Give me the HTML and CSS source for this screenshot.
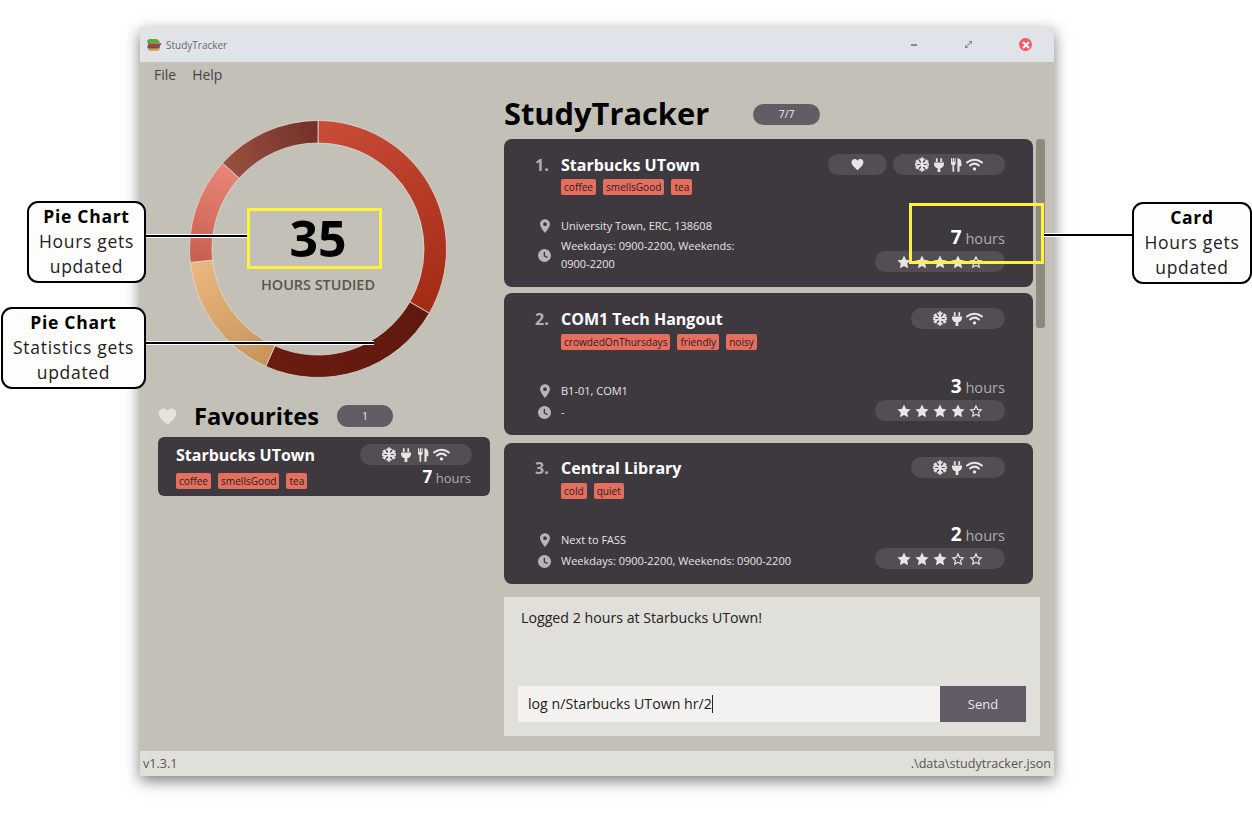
FILE: index.html
```html
<!DOCTYPE html>
<html lang="en">

<head>
    <meta charset="UTF-8">
    <title>StudyTracker</title>
    <link rel="stylesheet" href="styles.css">
</head>

<body>
    <svg class="defs" width="0" height="0">
        <symbol id="i-heart" viewBox="0 0 24 24">
            <path fill="currentColor" d="M12 22.500C5 16.500 1 12.800 1 8 1 4.400 3.700 2 6.800 2 9 2 11 3.200 12 5.200 13 3.200 15 2 17.200 2 20.300 2 23 4.400 23 8c0 4.800-4 8.500-11 14.500z" />
        </symbol>
        <symbol id="i-snow" viewBox="1 0 22 24">
            <g fill="none" stroke="currentColor" stroke-width="2.800" stroke-linecap="round">
                <path d="M12 1.500V22.500M2.900 6.750 21.100 17.250M2.900 17.250 21.100 6.750" />
                <path d="M9 3.500l3 3 3-3M9 20.500l3-3 3 3M2.200 10.700l4.100-1.100-1.100-4.100M21.800 13.300l-4.100 1.100 1.100 4.100M5.200 18.500l1.100-4.100-4.100-1.100M18.800 5.500l-1.100 4.100 4.100 1.100" />
            </g>
        </symbol>
        <symbol id="i-plug" viewBox="0 0 16 22">
            <path fill="currentColor" d="M3 0h2.800v6H3zM10.200 0H13v6h-2.800zM0 7h16v2.500c0 3.600-2.300 6-5.800 6.600V22H5.800v-5.900C2.300 15.500 0 13.100 0 9.500z" />
        </symbol>
        <symbol id="i-food" viewBox="0 0 18 22">
            <path fill="currentColor" d="M0 0h1.800v6h1V0h2v6h1V0h1.800v8c0 1.800-1 3-2.400 3.500V22H2.400V11.500C1 11 0 9.800 0 8zM10.500 0C14.500 0 17 3 17 8v5h-3v9h-3.500z" />
        </symbol>
        <symbol id="i-wifi" viewBox="0 0 24 18">
            <g fill="none" stroke="currentColor" stroke-width="2.800" stroke-linecap="round">
                <path d="M1.500 6.200C7.500.8 16.500.8 22.500 6.200" />
                <path d="M5.600 10.400c3.900-3.200 8.900-3.200 12.800 0" />
            </g>
            <circle cx="12" cy="15.200" r="2.400" fill="currentColor" />
        </symbol>
        <symbol id="i-star" viewBox="0 0 24 24">
            <path fill="currentColor" d="M12 1l3.400 7.300 7.900 1-5.800 5.400 1.500 7.900-7-3.900-7 3.900 1.500-7.900L.7 9.300l7.900-1z" />
        </symbol>
        <symbol id="i-star-o" viewBox="0 0 24 24">
            <path fill="none" stroke="currentColor" stroke-width="2" d="M12 3.300l2.700 5.900 6.400.8-4.700 4.400 1.200 6.400-5.600-3.100-5.600 3.100 1.200-6.400L2.900 10l6.400-.8z" />
        </symbol>
        <symbol id="i-pin" viewBox="0 0 16 22">
            <path fill="currentColor" fill-rule="evenodd" d="M8 0c4.400 0 8 3.500 8 7.800C16 13 8 22 8 22S0 13 0 7.800C0 3.500 3.600 0 8 0zm0 5a3 3 0 1 0 0 6 3 3 0 0 0 0-6z" />
        </symbol>
        <symbol id="i-clock" viewBox="0 0 24 24">
            <path fill="currentColor" fill-rule="evenodd" d="M12 0a12 12 0 1 1 0 24 12 12 0 0 1 0-24zm-1.500 5v8.200l6.400 3.800 1.300-2.100-5.200-3.100V5z" />
        </symbol>
    </svg>

    <div class="stage">
        <div class="window">
            <div class="titlebar">
                <svg class="app-icon" viewBox="0 0 14 12" width="14" height="12">
                    <path fill="#e8a23a" d="M1 9h10l2-1v2l-2 2H2z" />
                    <path fill="#2f5fa8" d="M0 7h11l2-1v2l-2 1.500H1z" />
                    <path fill="#c8352f" d="M1 4.500h10l3-.5v2l-3 1.500H1z" />
                    <path fill="#5fa83a" d="M2 0h8l3 3-2 2H1L0 2z" />
                </svg>
                <span class="app-name">StudyTracker</span>
                <div class="win-btns">
                    <span class="win-min"></span>
                    <svg class="win-max" viewBox="0 0 10 10">
                        <path fill="#85888c" d="M5 0H10v5zM0 5 5 10H0z" />
                        <path stroke="#85888c" stroke-width="1.500" d="M3 7l4-4" />
                    </svg>
                    <span class="win-close">
                        <svg viewBox="0 0 8 8" width="8" height="8">
                            <path stroke="#fff" stroke-width="2" d="M1 1l6 6M7 1 1 7" />
                        </svg>
                    </span>
                </div>
            </div>

            <div class="menubar">
                <span>File</span>
                <span>Help</span>
            </div>

            <div class="main">
                <div class="left">
                    <div class="chart">
                        <svg viewBox="0 0 260 260" width="260" height="260">
                            <defs>
                                <linearGradient id="g1" gradientUnits="userSpaceOnUse" x1="130" y1="0" x2="240" y2="190">
                                    <stop offset="0" stop-color="#ca4c39" />
                                    <stop offset="1" stop-color="#a32c17" />
                                </linearGradient>
                                <linearGradient id="g2" gradientUnits="userSpaceOnUse" x1="240" y1="190" x2="80" y2="250">
                                    <stop offset="0" stop-color="#5f190e" />
                                    <stop offset="1" stop-color="#6c1b10" />
                                </linearGradient>
                                <linearGradient id="g3" gradientUnits="userSpaceOnUse" x1="10" y1="145" x2="85" y2="245">
                                    <stop offset="0" stop-color="#e9b77f" />
                                    <stop offset="1" stop-color="#c69259" />
                                </linearGradient>
                                <linearGradient id="g4" gradientUnits="userSpaceOnUse" x1="45" y1="50" x2="10" y2="140">
                                    <stop offset="0" stop-color="#e88679" />
                                    <stop offset="1" stop-color="#c9604f" />
                                </linearGradient>
                                <linearGradient id="g5" gradientUnits="userSpaceOnUse" x1="40" y1="50" x2="130" y2="15">
                                    <stop offset="0" stop-color="#98503f" />
                                    <stop offset="1" stop-color="#74302a" />
                                </linearGradient>
                            </defs>
                            <g stroke="#dddbd4" stroke-width="0.800">
                                <path fill="url(#g1)" d="M130 1.500A128.500 128.500 0 0 1 241.280 194.250L221.800 183A106 106 0 0 0 130 24z" />
                                <path fill="url(#g2)" d="M241.280 194.250A128.500 128.500 0 0 1 77.740 247.390L86.890 226.840A106 106 0 0 0 221.800 183z" />
                                <path fill="url(#g3)" d="M77.740 247.390A128.500 128.500 0 0 1 2.210 143.430L24.580 141.080A106 106 0 0 0 86.890 226.840z" />
                                <path fill="url(#g4)" d="M2.210 143.430A128.500 128.500 0 0 1 34.510 44.020L51.230 59.070A106 106 0 0 0 24.580 141.080z" />
                                <path fill="url(#g5)" d="M34.510 44.020A128.500 128.500 0 0 1 130 1.500V24A106 106 0 0 0 51.230 59.070z" />
                            </g>
                        </svg>
                        <div class="chart-center">
                            <div class="chart-num">35</div>
                            <div class="chart-label">HOURS STUDIED</div>
                        </div>
                    </div>

                    <div class="fav-head">
                        <svg class="fav-heart"><use href="#i-heart" /></svg>
                        <span class="fav-title">Favourites</span>
                        <span class="badge badge-fav">1</span>
                    </div>

                    <div class="fav-card">
                        <div class="fav-info">
                            <div class="name">Starbucks UTown</div>
                            <div class="tags">
                                <span class="tag">coffee</span>
                                <span class="tag">smellsGood</span>
                                <span class="tag">tea</span>
                            </div>
                        </div>
                        <div class="card-side">
                            <div class="pill pill-wide">
                                <svg class="ic-snow"><use href="#i-snow" /></svg>
                                <svg class="ic-plug"><use href="#i-plug" /></svg>
                                <svg class="ic-food"><use href="#i-food" /></svg>
                                <svg class="ic-wifi"><use href="#i-wifi" /></svg>
                            </div>
                            <div class="hours"><b>7</b> hours</div>
                        </div>
                    </div>
                </div>

                <div class="right">
                    <div class="right-head">
                        <span class="big-title">StudyTracker</span>
                        <span class="badge badge-count">7/7</span>
                    </div>

                    <div class="list-wrap">
                        <div class="list">
                            <div class="card">
                                <div class="card-left">
                                    <div class="card-top">
                                        <span class="index">1.</span>
                                        <div>
                                            <div class="name">Starbucks UTown</div>
                                            <div class="tags">
                                                <span class="tag">coffee</span>
                                                <span class="tag">smellsGood</span>
                                                <span class="tag">tea</span>
                                            </div>
                                        </div>
                                    </div>
                                    <div class="details">
                                        <div class="detail">
                                            <svg class="ic-pin"><use href="#i-pin" /></svg>
                                            <span>University Town, ERC, 138608</span>
                                        </div>
                                        <div class="detail">
                                            <svg class="ic-clock"><use href="#i-clock" /></svg>
                                            <span>Weekdays: 0900-2200, Weekends:<br>0900-2200</span>
                                        </div>
                                    </div>
                                </div>
                                <div class="card-side">
                                    <div class="pills">
                                        <div class="pill pill-fav">
                                            <svg class="ic-heart"><use href="#i-heart" /></svg>
                                        </div>
                                        <div class="pill pill-wide">
                                            <svg class="ic-snow"><use href="#i-snow" /></svg>
                                            <svg class="ic-plug"><use href="#i-plug" /></svg>
                                            <svg class="ic-food"><use href="#i-food" /></svg>
                                            <svg class="ic-wifi"><use href="#i-wifi" /></svg>
                                        </div>
                                    </div>
                                    <div class="side-bottom">
                                        <div class="hours"><b>7</b> hours</div>
                                        <div class="pill pill-stars">
                                            <svg class="ic-star"><use href="#i-star" /></svg>
                                            <svg class="ic-star"><use href="#i-star" /></svg>
                                            <svg class="ic-star"><use href="#i-star" /></svg>
                                            <svg class="ic-star"><use href="#i-star" /></svg>
                                            <svg class="ic-star"><use href="#i-star-o" /></svg>
                                        </div>
                                    </div>
                                </div>
                            </div>

                            <div class="card">
                                <div class="card-left">
                                    <div class="card-top">
                                        <span class="index">2.</span>
                                        <div>
                                            <div class="name">COM1 Tech Hangout</div>
                                            <div class="tags">
                                                <span class="tag">crowdedOnThursdays</span>
                                                <span class="tag">friendly</span>
                                                <span class="tag">noisy</span>
                                            </div>
                                        </div>
                                    </div>
                                    <div class="details">
                                        <div class="detail">
                                            <svg class="ic-pin"><use href="#i-pin" /></svg>
                                            <span>B1-01, COM1</span>
                                        </div>
                                        <div class="detail">
                                            <svg class="ic-clock"><use href="#i-clock" /></svg>
                                            <span>-</span>
                                        </div>
                                    </div>
                                </div>
                                <div class="card-side">
                                    <div class="pills">
                                        <div class="pill pill-short">
                                            <svg class="ic-snow"><use href="#i-snow" /></svg>
                                            <svg class="ic-plug"><use href="#i-plug" /></svg>
                                            <svg class="ic-wifi"><use href="#i-wifi" /></svg>
                                        </div>
                                    </div>
                                    <div class="side-bottom">
                                        <div class="hours"><b>3</b> hours</div>
                                        <div class="pill pill-stars">
                                            <svg class="ic-star"><use href="#i-star" /></svg>
                                            <svg class="ic-star"><use href="#i-star" /></svg>
                                            <svg class="ic-star"><use href="#i-star" /></svg>
                                            <svg class="ic-star"><use href="#i-star" /></svg>
                                            <svg class="ic-star"><use href="#i-star-o" /></svg>
                                        </div>
                                    </div>
                                </div>
                            </div>

                            <div class="card">
                                <div class="card-left">
                                    <div class="card-top">
                                        <span class="index">3.</span>
                                        <div>
                                            <div class="name">Central Library</div>
                                            <div class="tags">
                                                <span class="tag">cold</span>
                                                <span class="tag">quiet</span>
                                            </div>
                                        </div>
                                    </div>
                                    <div class="details">
                                        <div class="detail">
                                            <svg class="ic-pin"><use href="#i-pin" /></svg>
                                            <span>Next to FASS</span>
                                        </div>
                                        <div class="detail">
                                            <svg class="ic-clock"><use href="#i-clock" /></svg>
                                            <span>Weekdays: 0900-2200, Weekends: 0900-2200</span>
                                        </div>
                                    </div>
                                </div>
                                <div class="card-side">
                                    <div class="pills">
                                        <div class="pill pill-short">
                                            <svg class="ic-snow"><use href="#i-snow" /></svg>
                                            <svg class="ic-plug"><use href="#i-plug" /></svg>
                                            <svg class="ic-wifi"><use href="#i-wifi" /></svg>
                                        </div>
                                    </div>
                                    <div class="side-bottom">
                                        <div class="hours"><b>2</b> hours</div>
                                        <div class="pill pill-stars">
                                            <svg class="ic-star"><use href="#i-star" /></svg>
                                            <svg class="ic-star"><use href="#i-star" /></svg>
                                            <svg class="ic-star"><use href="#i-star" /></svg>
                                            <svg class="ic-star"><use href="#i-star-o" /></svg>
                                            <svg class="ic-star"><use href="#i-star-o" /></svg>
                                        </div>
                                    </div>
                                </div>
                            </div>
                        </div>
                        <div class="scrollbar"></div>
                    </div>

                    <div class="result">
                        <div class="result-text">Logged 2 hours at Starbucks UTown!</div>
                        <div class="command">
                            <div class="command-input">log n/Starbucks UTown hr/2<span class="caret"></span></div>
                            <div class="send">Send</div>
                        </div>
                    </div>
                </div>
            </div>

            <div class="statusbar">
                <span>v1.3.1</span>
                <span>.\data\studytracker.json</span>
            </div>
        </div>

        <!-- annotations over the screenshot -->
        <div class="line line-hours"></div>
        <div class="line line-stats"></div>
        <div class="line line-card"></div>
        <div class="mark mark-hours"></div>
        <div class="mark mark-card"></div>

        <div class="callout callout-hours"><b>Pie Chart</b>Hours gets<br>updated</div>
        <div class="callout callout-stats"><b>Pie Chart</b>Statistics gets<br>updated</div>
        <div class="callout callout-card"><b>Card</b>Hours gets<br>updated</div>
    </div>
</body>

</html>
```

FILE: styles.css
```css
* {
    margin: 0;
    padding: 0;
    box-sizing: border-box;
}

body {
    background-color: white;
    font-family: "Open Sans", "Liberation Sans", sans-serif;
}

.defs {
    position: absolute;
}

.stage {
    position: relative;
    width: 1252px;
    height: 840px;
    padding: 27px 0 0 140px;
    overflow: hidden;
}

.window {
    display: flex;
    flex-direction: column;
    width: 914px;
    height: 749px;
    background-color: #c3c0b8;
    box-shadow: 0 5px 14px rgba(0, 0, 0, 0.5);
}

/* title bar */
.titlebar {
    display: flex;
    align-items: center;
    height: 35px;
    padding: 0 0 0 7px;
    background-color: #e0e4e8;
}

.app-name {
    margin-left: 5px;
    font-size: 10px;
    color: #68686c;
}

.win-btns {
    display: flex;
    align-items: center;
    margin-left: auto;
    padding-right: 22px;
}

.win-min {
    width: 6px;
    height: 2px;
    background-color: #85888c;
}

.win-max {
    width: 7px;
    height: 7px;
    margin-left: 48px;
}

.win-close {
    display: flex;
    align-items: center;
    justify-content: center;
    width: 13px;
    height: 13px;
    margin-left: 47px;
    border-radius: 50%;
    background-color: #f4586a;
}

.menubar {
    display: flex;
    gap: 16px;
    height: 26px;
    padding: 3px 0 0 14px;
    font-size: 14px;
    line-height: 20px;
    color: #444;
}

.main {
    display: flex;
    flex: 1;
    min-height: 0;
}

/* left column */
.left {
    flex-shrink: 0;
    width: 364px;
    padding-left: 18px;
}

.chart {
    position: relative;
    width: 260px;
    height: 260px;
    margin: 31px 0 0 30px;
}

.chart-center {
    position: absolute;
    top: 87px;
    left: 0;
    width: 260px;
    text-align: center;
}

.chart-num {
    font-size: 50px;
    font-weight: 700;
    line-height: 64px;
    color: black;
}

.chart-label {
    margin-top: 6px;
    font-size: 14.4px;
    font-weight: 600;
    line-height: 18px;
    color: #57554f;
}

.fav-head {
    display: flex;
    align-items: center;
    height: 24px;
    margin-top: 25px;
}

.fav-heart {
    width: 19px;
    height: 19px;
    color: #e6e4de;
}

.fav-title {
    margin-left: 17px;
    font-size: 23.7px;
    font-weight: 700;
    color: black;
}

.badge {
    display: flex;
    align-items: center;
    justify-content: center;
    border-radius: 11px;
    background-color: #625c65;
    font-size: 10.5px;
    color: #eee;
}

.badge-fav {
    width: 56px;
    height: 22px;
    margin-left: 18px;
}

.fav-card {
    display: flex;
    justify-content: space-between;
    width: 332px;
    height: 59px;
    margin-top: 9px;
    padding: 7px 18px 0;
    border-radius: 6px;
    background-color: #3e393f;
}

.fav-card .tags {
    margin-top: 7px;
}

/* right column */
.right {
    display: flex;
    flex-direction: column;
    flex-shrink: 0;
    width: 550px;
}

.right-head {
    display: flex;
    align-items: center;
    height: 51px;
}

.big-title {
    margin-top: -2px;
    font-size: 30.8px;
    font-weight: 700;
    color: black;
}

.badge-count {
    width: 67px;
    height: 21px;
    margin: 1px 0 0 44px;
}

.list-wrap {
    display: flex;
    gap: 3px;
    height: 458px;
}

.list {
    flex-shrink: 0;
    width: 529px;
}

.scrollbar {
    width: 9px;
    height: 189px;
    border-radius: 3px;
    background-color: #8b8a7f;
}

.card {
    display: flex;
    justify-content: space-between;
    height: 142px;
    padding: 15px 28px 14px 31px;
    border-radius: 8px;
    background-color: #3e393f;
}

.card:nth-child(1) {
    height: 148px;
}

.card:nth-child(2) {
    margin-top: 6px;
}

.card:nth-child(3) {
    height: 141px;
    margin-top: 8px;
    padding-top: 14px;
}

.card:nth-child(odd) .side-bottom {
    margin-bottom: 1px;
}

.card:nth-child(1) .tags {
    margin-top: 3px;
}

.card:nth-child(1) .details {
    gap: 2px;
}

.card-left {
    display: flex;
    flex-direction: column;
    justify-content: space-between;
}

.card-top {
    display: flex;
}

.index {
    width: 26px;
    font-size: 16px;
    font-weight: 700;
    line-height: 22px;
    color: #b0aeb0;
}

.name {
    font-size: 16px;
    font-weight: 700;
    line-height: 22px;
    color: white;
}

.tags {
    display: flex;
    gap: 7px;
    margin-top: 4px;
}

.tag {
    height: 16px;
    padding: 0 3px;
    border-radius: 2px;
    background-color: #e56f5f;
    font-size: 10.1px;
    font-weight: 500;
    line-height: 16px;
    color: #2f1d1e;
}

.details {
    display: flex;
    flex-direction: column;
    gap: 3px;
    margin-left: 3px;
}

.detail {
    display: flex;
    align-items: center;
    gap: 9px;
    font-size: 11px;
    line-height: 18px;
    color: #e4e4e4;
}

.ic-pin {
    width: 10px;
    height: 14px;
    margin: 0 2px;
    color: #b7b5b7;
}

.ic-clock {
    width: 13px;
    height: 13px;
    margin-right: 1px;
    color: #b7b5b7;
}

.card-side {
    display: flex;
    flex-direction: column;
    justify-content: space-between;
    align-items: flex-end;
}

.fav-card .card-side {
    justify-content: flex-start;
}

.pills {
    display: flex;
    gap: 6px;
}

.pill {
    display: flex;
    align-items: center;
    justify-content: center;
    height: 21px;
    border-radius: 11px;
    background-color: #524e53;
    color: #e8e6e4;
}

.pill-fav {
    width: 59px;
}

.pill-wide {
    gap: 5px;
    width: 112px;
}

.pill-short {
    gap: 5px;
    width: 94px;
}

.pill-stars {
    gap: 5px;
    width: 130px;
    padding-right: 2px;
}

.side-bottom {
    display: flex;
    flex-direction: column;
    align-items: flex-end;
}

.hours {
    margin-bottom: 1px;
    font-size: 14.6px;
    line-height: 24px;
    color: #aeacae;
}

.hours b {
    font-size: 19px;
    color: white;
}

.fav-card .hours {
    padding-right: 1px;
    font-size: 13px;
}

.fav-card .hours b {
    font-size: 17px;
}

.ic-heart {
    width: 13px;
    height: 13px;
}

.ic-snow {
    width: 14px;
    height: 15px;
}

.ic-plug {
    width: 10px;
    height: 14px;
}

.ic-food {
    width: 11px;
    height: 14px;
    margin-left: 2px;
}

.ic-wifi {
    width: 17px;
    height: 13px;
    margin-left: -1px;
}

.ic-star {
    width: 14px;
    height: 14px;
    margin-right: -1px;
}

/* command box */
.result {
    display: flex;
    flex-direction: column;
    justify-content: space-between;
    width: 536px;
    height: 139px;
    padding: 11px 14px 14px;
    background-color: #e0dfd9;
}

.result-text {
    padding-left: 3px;
    font-size: 14.2px;
    line-height: 20px;
    color: #222;
}

.command {
    display: flex;
    height: 36px;
}

.command-input {
    flex: 1;
    padding-left: 10px;
    border-radius: 2px 0 0 2px;
    background-color: #f3f2f0;
    font-size: 14.2px;
    line-height: 36px;
    color: #222;
}

.caret {
    display: inline-block;
    width: 1px;
    height: 18px;
    vertical-align: -4px;
    background-color: #222;
}

.send {
    width: 86px;
    background-color: #625c67;
    font-size: 13px;
    line-height: 36px;
    text-align: center;
    color: #e8e8e8;
}

.statusbar {
    display: flex;
    justify-content: space-between;
    align-items: center;
    height: 25px;
    padding: 0 3px;
    background-color: #e0dfd9;
    font-size: 12.6px;
    color: #555;
}

/* annotations */
.callout {
    position: absolute;
    display: flex;
    flex-direction: column;
    align-items: center;
    justify-content: center;
    padding-bottom: 2px;
    border: 2px solid black;
    border-radius: 11px;
    background-color: #fdfdfb;
    font-size: 17.5px;
    letter-spacing: 0.7px;
    line-height: 25px;
    text-align: center;
    color: #222;
}

.callout b {
    color: black;
}

.callout-hours {
    top: 201px;
    left: 27px;
    width: 119px;
    height: 82px;
}

.callout-stats {
    top: 307px;
    left: 1px;
    width: 145px;
    height: 82px;
}

.callout-card {
    top: 202px;
    left: 1132px;
    width: 120px;
    height: 82px;
}

.mark {
    position: absolute;
    border: 3px solid #fff23f;
}

.mark-hours {
    top: 208px;
    left: 247px;
    width: 135px;
    height: 61px;
}

.mark-card {
    top: 203px;
    left: 909px;
    width: 135px;
    height: 61px;
}

.line {
    position: absolute;
    height: 4px;
    border-top: 1px solid white;
    border-bottom: 1px solid white;
    background-color: black;
}

.line-hours {
    top: 234px;
    left: 145px;
    width: 103px;
}

.line-stats {
    top: 341px;
    left: 145px;
    width: 229px;
}

.line-card {
    top: 233px;
    left: 1043px;
    width: 90px;
}
```
